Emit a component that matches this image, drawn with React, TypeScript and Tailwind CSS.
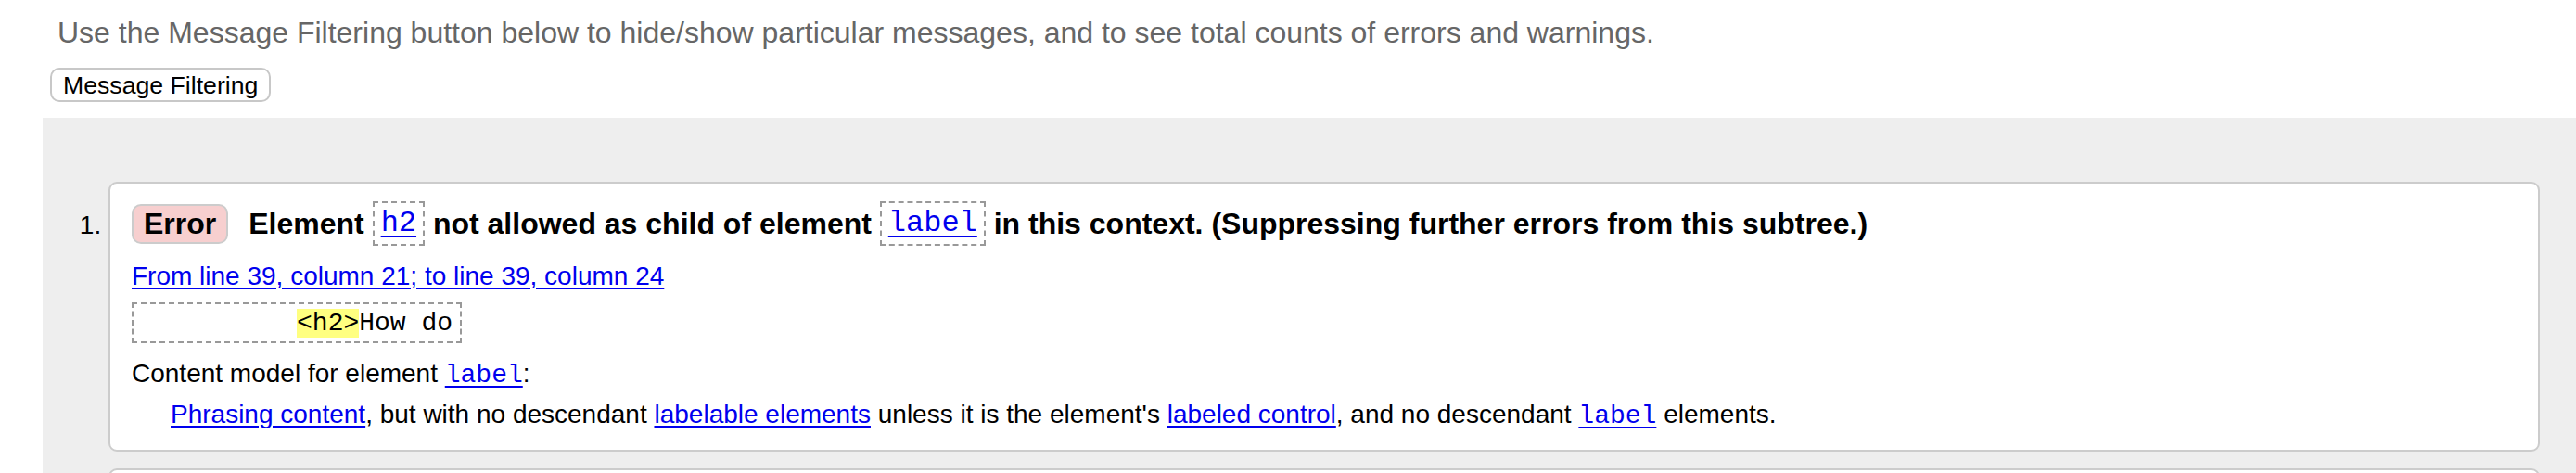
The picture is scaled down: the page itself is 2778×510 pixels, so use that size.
import React from "react";

const sans = "font-['Liberation_Sans',Arial,Helvetica,sans-serif]";
const mono = "font-['Liberation_Mono','Courier_New',monospace]";

function CodeBox({ children }: { children: React.ReactNode }) {
  return (
    <span className="flex h-[48px] items-center border-2 border-dashed border-[#999] px-[7px]">
      <a href="#" className={`${mono} font-normal text-[32px] leading-[36px] text-[#0000ee] underline decoration-2 underline-offset-[5px]`}>
        {children}
      </a>
    </span>
  );
}

function InlineCode({ children }: { children: React.ReactNode }) {
  return (
    <a href="#" className={`${mono} text-[28px] text-[#0000ee] underline decoration-2 underline-offset-[4px]`}>
      {children}
    </a>
  );
}

function Link({ children }: { children: React.ReactNode }) {
  return (
    <a href="#" className="text-[#0000ee] underline decoration-2 underline-offset-[3px]">
      {children}
    </a>
  );
}

export default function App() {
  return (
    <div className={`${sans} h-[510px] w-[2778px] overflow-hidden bg-white text-black`}>
      <p className="pl-[62px] pt-[17px] text-[32px] leading-[37px] text-[#666]">
        Use the Message Filtering button below to hide/show particular messages, and to see total counts of errors and warnings.
      </p>
      <div className="mt-[19px] pl-[54px]">
        <button className="h-[37px] rounded-[10px] border-2 border-[#c8c8c8] bg-white px-[12px] text-[26.67px] leading-[30px] text-black">
          Message Filtering
        </button>
      </div>
      <div className="ml-[46px] mt-[17px] bg-[#eeeeee] pb-[40px] pl-[71px] pr-[39px] pt-[69px]">
        <ol className="list-decimal">
          <li className="rounded-[9px] border-2 border-[#cccccc] bg-white pb-[20px] pl-[23px] pt-[19px] text-[28px] leading-[32px] marker:text-[28px] marker:text-black">
            <div className="flex items-center whitespace-nowrap text-[32px] font-bold leading-[37px]">
              <span className="flex h-[43px] items-center rounded-[10px] border-2 border-[#cccccc] bg-[#f7cfcf] px-[11px]">
                Error
              </span>
              <span className="ml-[22px] whitespace-pre">Element </span>
              <CodeBox>h2</CodeBox>
              <span className="whitespace-pre"> not allowed as child of element </span>
              <CodeBox>label</CodeBox>
              <span className="whitespace-pre"> in this context. (Suppressing further errors from this subtree.)</span>
            </div>
            <p className="mt-[17px]">
              <Link>From line 39, column 21; to line 39, column 24</Link>
            </p>
            <div className="mt-[12px] inline-block border-2 border-dashed border-[#999] px-[8px] py-[3px]">
              <code className={`${mono} whitespace-pre text-[28px] leading-[32px]`}>
                {"          "}
                <span className="bg-[#ffff80]">{"<h2>"}</span>
                {"How do"}
              </code>
            </div>
            <p className="mt-[17px]">
              Content model for element <InlineCode>label</InlineCode>:
            </p>
            <p className="ml-[42px] mt-[10px]">
              <Link>Phrasing content</Link>, but with no descendant <Link>labelable elements</Link> unless it is the
              element's <Link>labeled control</Link>, and no descendant <InlineCode>label</InlineCode> elements.
            </p>
          </li>
          <li className="mt-[18px] h-[200px] list-none rounded-[9px] border-2 border-[#cccccc] bg-white"></li>
        </ol>
      </div>
    </div>
  );
}
